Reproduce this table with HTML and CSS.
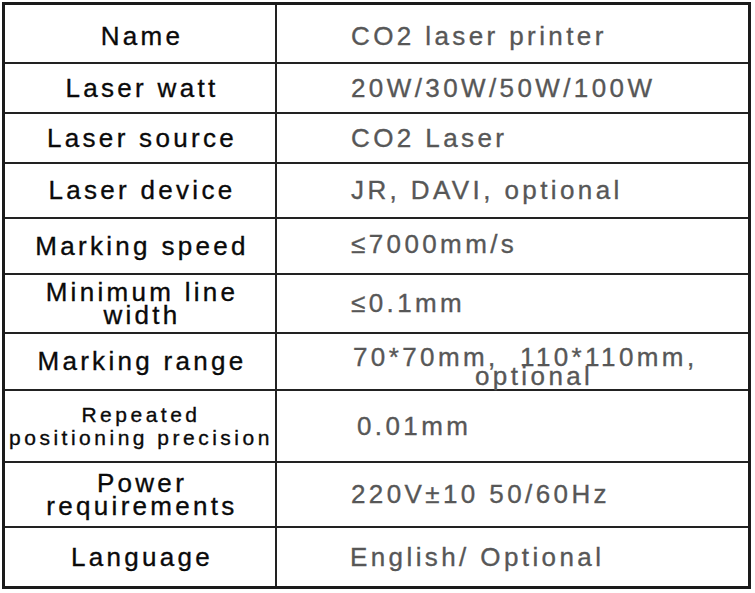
FILE: index.html
```html
<!DOCTYPE html>
<html>
<head>
<meta charset="utf-8">
<link rel="stylesheet" href="styles.css">
</head>
<body>
<div class="spec">
  <div class="k r1">Name</div><div class="v r1">CO2 laser printer</div>
  <div class="k">Laser watt</div><div class="v">20W/30W/50W/100W</div>
  <div class="k">Laser source</div><div class="v">CO2 Laser</div>
  <div class="k">Laser device</div><div class="v">JR, DAVI, optional</div>
  <div class="k">Marking speed</div><div class="v up">≤7000mm/s</div>
  <div class="k two">Minimum line<br>width</div><div class="v">≤0.1mm</div>
  <div class="k">Marking range</div><div class="v range"><div class="pre">70*70mm,  110*110mm,</div><div class="indent">optional</div></div>
  <div class="k two small">Repeated<br>positioning precision</div><div class="v shift">0.01mm</div>
  <div class="k two">Power<br>requirements</div><div class="v">220V±10 50/60Hz</div>
  <div class="k last">Language</div><div class="v last back">English/ Optional</div>
</div>
</body>
</html>
```

FILE: styles.css
```css
html, body {
  margin: 0;
  padding: 0;
  background: #ffffff;
}
.spec {
  box-sizing: border-box;
  margin: 2px 0 0 2px;
  width: 749px;
  border: 3px solid #1a1a1a;
  display: grid;
  grid-template-columns: 272px 1fr;
  grid-template-rows: 59px 50px 50px 55px 56px 59px 57px 72px 65px 58px;
  font-family: "Liberation Sans", Arial, sans-serif;
  font-size: 26px;
  -webkit-text-stroke: 0.35px currentColor;
}
.k, .v {
  box-sizing: border-box;
  border-bottom: 2px solid #222222;
  display: flex;
  flex-direction: column;
  justify-content: center;
}
.k {
  border-right: 2px solid #222222;
  color: #0a0a0a;
  text-align: center;
  align-items: center;
  padding-left: 4px;
  letter-spacing: 3.3px;
}
.v {
  color: #575757;
  padding-left: 74px;
  letter-spacing: 3.4px;
}
.r1 {
  padding-top: 5px;
}
.up {
  padding-bottom: 4px;
}
.last {
  border-bottom: none;
}
.two {
  line-height: 23px;
}
.small {
  font-size: 21px;
  letter-spacing: 3.5px;
  line-height: 23px;
  padding-left: 2px;
}
.range {
  padding-left: 76px;
  padding-top: 10px;
  line-height: 19px;
}
.pre {
  white-space: pre;
}
.indent {
  padding-left: 122px;
}
.shift {
  padding-left: 80px;
}
.back {
  padding-left: 73px;
}
```
